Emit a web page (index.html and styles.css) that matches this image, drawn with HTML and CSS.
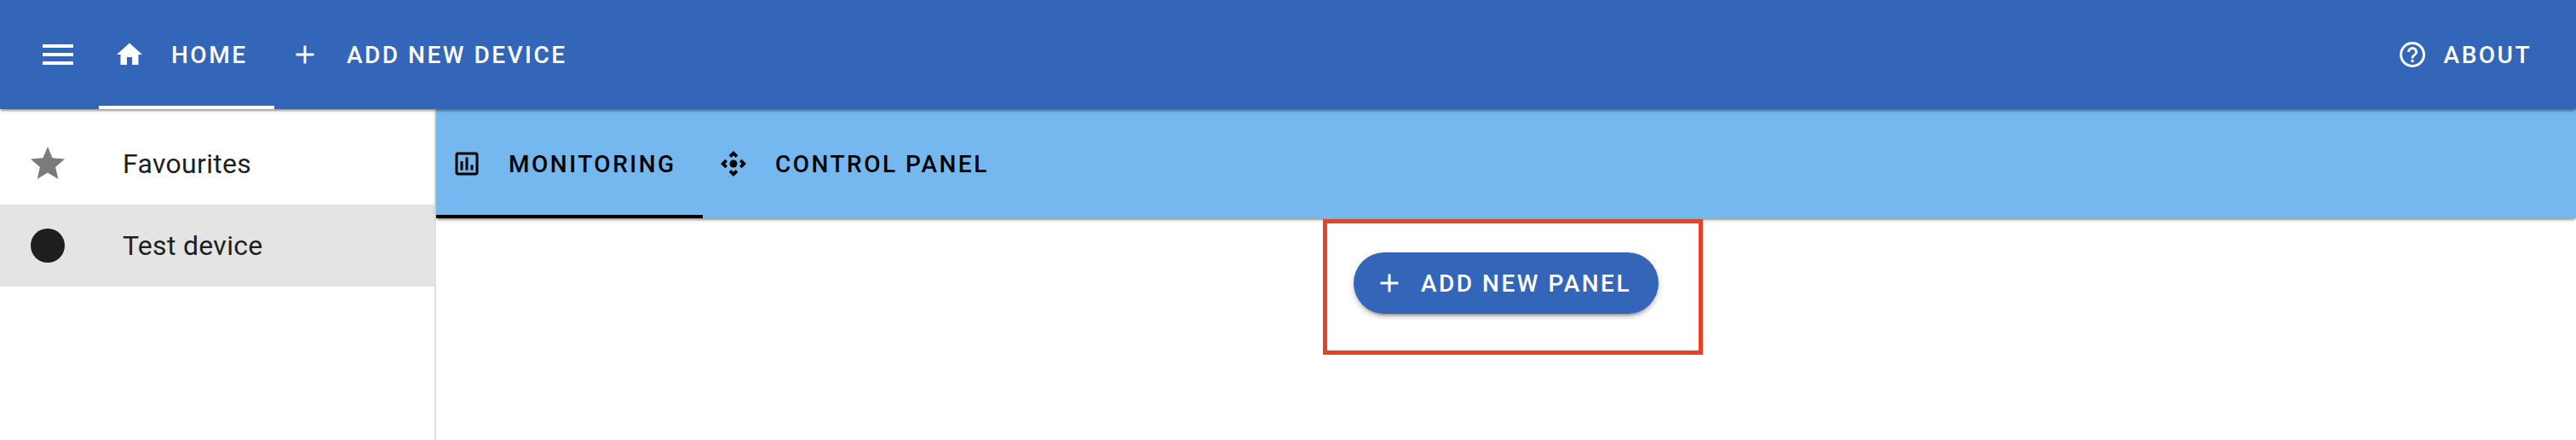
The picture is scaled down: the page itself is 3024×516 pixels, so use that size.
FILE: index.html
```html
<!DOCTYPE html>
<html lang="en">
<head>
<meta charset="utf-8">
<title>Devices</title>
<link rel="stylesheet" href="styles.css">
</head>
<body>
<header class="app-bar">
  <button class="menu-button" aria-label="Menu"><svg class="icon large" viewBox="0 0 24 24"><path d="M3,6H21V8H3V6M3,11H21V13H3V11M3,16H21V18H3V16Z"/></svg></button>
  <nav class="tabs">
    <a class="tab home active"><svg class="icon" viewBox="0 0 24 24"><path d="M10,20V14H14V20H19V12H22L12,3L2,12H5V20H10Z"/></svg><span>HOME</span></a>
    <a class="tab add-device"><svg class="icon" viewBox="0 0 24 24"><path d="M19,13H13V19H11V13H5V11H11V5H13V11H19V13Z"/></svg><span>ADD NEW DEVICE</span></a>
  </nav>
  <a class="about"><svg class="icon" viewBox="0 0 24 24"><path d="M11,18H13V16H11V18M12,2A10,10 0 0,0 2,12A10,10 0 0,0 12,22A10,10 0 0,0 22,12A10,10 0 0,0 12,2M12,20C7.59,20 4,16.41 4,12C4,7.59 7.59,4 12,4C16.41,4 20,7.59 20,12C20,16.41 16.41,20 12,20M12,6A4,4 0 0,0 8,10H10A2,2 0 0,1 12,8A2,2 0 0,1 14,10C14,12 11,11.75 11,15H13C13,12.75 16,12.5 16,10A4,4 0 0,0 12,6Z"/></svg><span>ABOUT</span></a>
</header>
<div class="layout">
  <aside class="drawer">
    <a class="item"><svg class="icon large star" viewBox="0 0 24 24"><path d="M12,17.27L18.18,21L16.54,13.97L22,9.24L14.81,8.62L12,2L9.19,8.62L2,9.24L7.45,13.97L5.82,21L12,17.27Z"/></svg><span>Favourites</span></a>
    <a class="item selected"><svg class="icon large" viewBox="0 0 24 24"><circle cx="12" cy="12" r="10"/></svg><span>Test device</span></a>
  </aside>
  <main class="content">
    <nav class="device-bar">
      <a class="tab monitoring active"><svg class="icon" viewBox="0 0 24 24"><path d="M9 17H7V10H9V17M13 17H11V7H13V17M17 17H15V13H17V17M19 19H5V5H19V19.1M19 3H5C3.9 3 3 3.9 3 5V19C3 20.1 3.9 21 5 21H19C20.1 21 21 20.1 21 19V5C21 3.9 20.1 3 19 3Z"/></svg><span>MONITORING</span></a>
      <a class="tab control"><svg class="icon" viewBox="0 0 24 24"><path d="M15.54 5.54L13.77 7.3 12 5.54 10.23 7.3 8.46 5.54 12 2zM18.46 15.54L16.7 13.77 18.46 12 16.7 10.23 18.46 8.46 22 12zM8.46 18.46L10.23 16.7 12 18.46 13.77 16.7 15.54 18.46 12 22zM5.54 8.46L7.3 10.23 5.54 12 7.3 13.77 5.54 15.54 2 12z"/><circle cx="12" cy="12" r="3"/></svg><span>CONTROL PANEL</span></a>
    </nav>
    <section class="panels">
      <button class="add-panel"><svg class="icon" viewBox="0 0 24 24"><path d="M19,13H13V19H11V13H5V11H11V5H13V11H19V13Z"/></svg><span>ADD NEW PANEL</span></button>
      <div class="highlight"></div>
    </section>
  </main>
</div>
</body>
</html>
```
FILE: styles.css
```css
* { box-sizing: border-box; }
html, body { height: 100%; }
body {
  margin: 0;
  display: flex;
  flex-direction: column;
  overflow: hidden;
  background: #fff;
  font-family: Roboto, sans-serif;
  font-size: 28px;
  font-weight: 500;
  letter-spacing: 2.5px;
  white-space: nowrap;
}
button {
  border: 0;
  padding: 0;
  background: none;
  color: inherit;
  font: inherit;
  letter-spacing: inherit;
}
.icon { width: 36px; height: 36px; flex: none; fill: currentColor; }
.icon.large { width: 48px; height: 48px; }

.app-bar, .device-bar {
  position: relative;
  flex: none;
  display: flex;
  height: 128px;
  box-shadow: 0 4px 2px -2px rgba(0,0,0,.2), 0 2px 2px 0 rgba(0,0,0,.14), 0 2px 6px 0 rgba(0,0,0,.12);
}
.app-bar { z-index: 2; background: #3365b9; color: #fff; padding-right: 52px; }
.menu-button { display: flex; align-items: center; padding-left: 44px; width: 116px; }
.tabs { display: flex; flex: 1; }
.tab { display: flex; align-items: center; border-bottom: 4px solid transparent; padding-top: 4px; }
.tab.active { border-bottom-color: currentColor; }
.home { width: 206px; padding-left: 18px; gap: 31px; }
.add-device { padding-left: 18px; gap: 31px; }
.about { display: flex; align-items: center; gap: 19px; }

.layout { display: flex; flex: 1; min-height: 0; }
.drawer { width: 512px; flex: none; padding-top: 16px; border-right: 2px solid #e0e0e0; }
.item {
  display: flex;
  align-items: center;
  height: 96px;
  padding-left: 32px;
  gap: 64px;
  color: #1e1e1e;
  font-size: 32px;
  font-weight: 400;
  letter-spacing: .3px;
}
.item.selected { background: #e4e4e4; }
.star { color: #7b7b7b; }

.content { flex: 1; display: flex; flex-direction: column; }
.device-bar { background: #75b8f0; color: #000; }
.monitoring { width: 313px; padding-left: 18px; gap: 31px; }
.control { padding-left: 18px; gap: 31px; }
.panels { position: relative; display: flex; justify-content: center; padding-top: 40px; }
.add-panel {
  display: flex;
  align-items: center;
  width: 358px;
  height: 72px;
  padding-left: 24px;
  gap: 19px;
  border-radius: 36px;
  background: #3365b9;
  color: #fff;
  box-shadow: 0 6px 2px -4px rgba(0,0,0,.2), 0 4px 4px 0 rgba(0,0,0,.14), 0 2px 10px 0 rgba(0,0,0,.12);
}
/* Frame drawn over the panel area around the add button */
.highlight {
  position: absolute;
  left: 1040.5px;
  top: 1px;
  width: 446px;
  height: 159px;
  border: 5px solid #ec4025;
}
```
